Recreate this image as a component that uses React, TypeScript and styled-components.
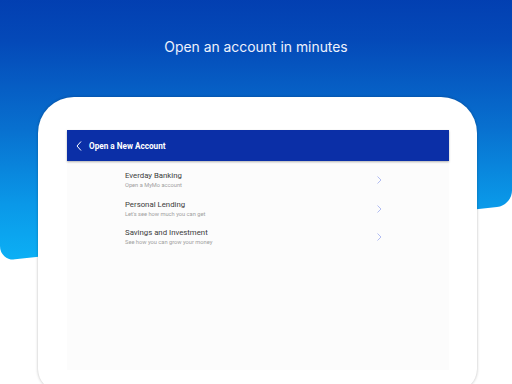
import React from "react";
import styled, {createGlobalStyle} from "styled-components";

const GlobalStyle = createGlobalStyle`
  html, body {
    margin: 0;
    padding: 0;
    background: #ffffff;
  }
  body {
    font-family: Roboto, "Liberation Sans", sans-serif;
  }
`

const Page = styled.div`
  position: relative;
  width: 512px;
  height: 384px;
  overflow: hidden;
  background: #ffffff;

  &::before {
    content: "";
    position: absolute;
    left: 0;
    top: 0;
    width: 512px;
    height: 261px;
    border-radius: 0 0 15px 15px;
    transform-origin: bottom left;
    transform: skewY(-6.2deg);
    background: linear-gradient(186deg, #0032a8 0%, #0449b8 30%, #0870cf 58%, #0a98e8 82%, #0cb0f5 100%);
    z-index: 0;
  }
`

const Content = styled.div`
  position: relative;
  z-index: 1;
  display: flex;
  flex-direction: column;
  align-items: center;
`

const Headline = styled.h1`
  margin: 0;
  padding-top: 37px;
  font-family: Inter, "Noto Sans", sans-serif;
  font-size: 13.9px;
  font-weight: 400;
  line-height: 20px;
  color: #eef2fd;
`

const Tablet = styled.div`
  margin-top: 40px;
  margin-left: 3px;
  width: 439px;
  height: 294px;
  box-sizing: border-box;
  padding: 33px 28px 0 29px;
  background: #ffffff;
  border-radius: 36px 36px 22px 22px;
  box-shadow: 0 0 3px rgba(0, 0, 0, 0.28);
`

const Screen = styled.div`
  height: 240px;
  background: #fcfcfc;
  display: flex;
  flex-direction: column;
`

const AppBar = styled.div`
  height: 31px;
  flex-shrink: 0;
  display: flex;
  align-items: center;
  gap: 7px;
  padding-left: 9px;
  background: #0b2fa7;
  box-shadow: 0 1px 2px rgba(0, 0, 0, 0.3);
  color: #ffffff;
`

const AppBarTitle = styled.span`
  font-family: Roboto, "Liberation Sans", sans-serif;
  font-size: 8.2px;
  font-weight: 700;
`

const List = styled.div`
  display: flex;
  flex-direction: column;
  padding: 10px 67px 0 58px;
`

const Row = styled.div`
  height: 28.6px;
  display: flex;
  align-items: flex-start;
  justify-content: space-between;
`

const RowText = styled.div`
  display: flex;
  flex-direction: column;
  gap: 1px;
`

const RowTitle = styled.span`
  font-size: 7.8px;
  line-height: 9px;
  color: #3b3b3b;
`

const RowSub = styled.span`
  font-size: 5.7px;
  line-height: 8px;
  color: #a0a0a0;
`

const Chevron = styled.svg`
  margin-top: 5px;
`

const rows = [
    {title: "Everday Banking", sub: "Open a MyMo account"},
    {title: "Personal Lending", sub: "Let's see how much you can get"},
    {title: "Savings and Investment", sub: "See how you can grow your money"},
]

export default function App() {
    return (
        <Page>
            <GlobalStyle/>
            <Content>
                <Headline>Open an account in minutes</Headline>
                <Tablet>
                    <Screen>
                        <AppBar>
                            <svg width="6" height="10" viewBox="0 0 6 10">
                                <polyline points="5,0.5 1,5 5,9.5" fill="none" stroke="#ffffff" strokeWidth="1"/>
                            </svg>
                            <AppBarTitle>Open a New Account</AppBarTitle>
                        </AppBar>
                        <List>
                            {rows.map((item, index) => (
                                <Row key={index}>
                                    <RowText>
                                        <RowTitle>{item.title}</RowTitle>
                                        <RowSub>{item.sub}</RowSub>
                                    </RowText>
                                    <Chevron width="5" height="8" viewBox="0 0 5 8">
                                        <polyline points="0.5,0.5 4,4 0.5,7.5" fill="none" stroke="#a9b5f0" strokeWidth="0.9"/>
                                    </Chevron>
                                </Row>
                            ))}
                        </List>
                    </Screen>
                </Tablet>
            </Content>
        </Page>
    );
}
